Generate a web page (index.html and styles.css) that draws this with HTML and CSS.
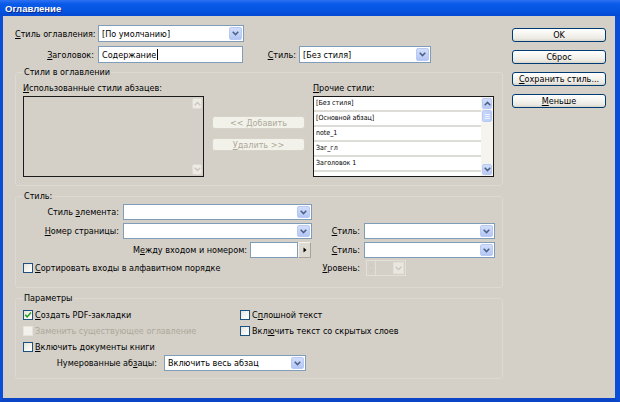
FILE: index.html
```html
<!DOCTYPE html>
<html lang="ru">
<head>
<meta charset="utf-8">
<title>Оглавление</title>
<link rel="stylesheet" href="styles.css">
</head>
<body>
<div class="window">
  <div class="titlebar"><span class="title">Оглавление</span></div>
  <div class="client">
    <div class="content">
      <div class="row r1">
        <span class="lbl w83"><u>С</u>тиль оглавления:</span>
        <div class="combo w146"><span class="val">[По умолчанию]</span><span class="drop"><svg width="7" height="5" viewBox="0 0 7 5"><path d="M0.7 0.7 L3.5 3.6 L6.3 0.7" fill="none" stroke="#4d6185" stroke-width="1.5"/></svg></span></div>
      </div>
      <div class="row r2">
        <span class="lbl w83"><u>З</u>аголовок:</span>
        <div class="input w145"><span class="val">Содержание</span><span class="caret"></span></div>
        <span class="lbl w56"><u>С</u>тиль:</span>
        <div class="combo w132"><span class="val">[Без стиля]</span><span class="drop"><svg width="7" height="5" viewBox="0 0 7 5"><path d="M0.7 0.7 L3.5 3.6 L6.3 0.7" fill="none" stroke="#4d6185" stroke-width="1.5"/></svg></span></div>
      </div>

      <fieldset class="group g1">
        <legend>Стили в оглавлении</legend>
        <div class="g1-body">
          <div class="col-list">
            <div class="cap"><u>И</u>спользованные стили абзацев:</div>
            <div class="listbox disabled">
              <div class="items"></div>
              <div class="vscroll">
                <span class="sbtn off"><svg width="7" height="5" viewBox="0 0 7 5"><path d="M0.7 4.3 L3.5 1.4 L6.3 4.3" fill="none" stroke="#c9c7bd" stroke-width="1.4"/></svg></span>
                <span class="strack"></span>
                <span class="sbtn off"><svg width="7" height="5" viewBox="0 0 7 5"><path d="M0.7 0.7 L3.5 3.6 L6.3 0.7" fill="none" stroke="#c9c7bd" stroke-width="1.4"/></svg></span>
              </div>
            </div>
          </div>
          <div class="col-mid">
            <span class="btn dis"><span>&lt;&lt; <u>Д</u>обавить</span></span>
            <span class="btn dis"><span><u>У</u>далить &gt;&gt;</span></span>
          </div>
          <div class="col-list">
            <div class="cap"><u>П</u>рочие стили:</div>
            <div class="listbox">
              <div class="items">
                <div class="item">[Без стиля]</div>
                <div class="item">[Основной абзац]</div>
                <div class="item">note_1</div>
                <div class="item">Заг_гл</div>
                <div class="item">Заголовок 1</div>
                <div class="item"></div>
              </div>
              <div class="vscroll on">
                <span class="sbtn"><svg width="7" height="5" viewBox="0 0 7 5"><path d="M0.7 4.3 L3.5 1.4 L6.3 4.3" fill="none" stroke="#4d6185" stroke-width="1.5"/></svg></span>
                <span class="thumb"><i></i><i></i><i></i></span>
                <span class="strack"></span>
                <span class="sbtn"><svg width="7" height="5" viewBox="0 0 7 5"><path d="M0.7 0.7 L3.5 3.6 L6.3 0.7" fill="none" stroke="#4d6185" stroke-width="1.5"/></svg></span>
              </div>
            </div>
          </div>
        </div>
      </fieldset>

      <fieldset class="group g2">
        <legend>Стиль:</legend>
        <div class="row ra">
          <span class="lbl w100">Стиль <u>э</u>лемента:</span>
          <div class="combo w189"><span class="val"></span><span class="drop"><svg width="7" height="5" viewBox="0 0 7 5"><path d="M0.7 0.7 L3.5 3.6 L6.3 0.7" fill="none" stroke="#4d6185" stroke-width="1.5"/></svg></span></div>
        </div>
        <div class="row rb">
          <span class="lbl w100"><u>Н</u>омер страницы:</span>
          <div class="combo w189"><span class="val"></span><span class="drop"><svg width="7" height="5" viewBox="0 0 7 5"><path d="M0.7 0.7 L3.5 3.6 L6.3 0.7" fill="none" stroke="#4d6185" stroke-width="1.5"/></svg></span></div>
          <span class="lbl w52"><u>С</u>тиль:</span>
          <div class="combo w131"><span class="val"></span><span class="drop"><svg width="7" height="5" viewBox="0 0 7 5"><path d="M0.7 0.7 L3.5 3.6 L6.3 0.7" fill="none" stroke="#4d6185" stroke-width="1.5"/></svg></span></div>
        </div>
        <div class="row rc">
          <span class="lbl w227">М<u>е</u>жду входом и номером:</span>
          <div class="input w48"></div>
          <span class="arrowbtn"><svg width="4" height="6" viewBox="0 0 4 6"><path d="M0.5 0.5 L3.5 3 L0.5 5.5 Z" fill="#000"/></svg></span>
          <span class="lbl w53"><u>С</u>тиль:</span>
          <div class="combo w131"><span class="val"></span><span class="drop"><svg width="7" height="5" viewBox="0 0 7 5"><path d="M0.7 0.7 L3.5 3.6 L6.3 0.7" fill="none" stroke="#4d6185" stroke-width="1.5"/></svg></span></div>
        </div>
        <div class="row rd">
          <span class="check w289"><span class="box"></span><span><u>С</u>ортировать входы в алфавитном порядке</span></span>
          <span class="lbl w52"><u>У</u>ровень:</span>
          <div class="spinner">
            <span class="spin"><svg width="5" height="10" viewBox="0 0 5 10"><path d="M0.5 3.5 L2.5 1.5 L4.5 3.5 M0.5 6.5 L2.5 8.5 L4.5 6.5" fill="none" stroke="#c9c7bd" stroke-width="1"/></svg></span>
            <span class="spinfield"></span>
            <span class="spindrop"><svg width="7" height="5" viewBox="0 0 7 5"><path d="M0.7 0.7 L3.5 3.6 L6.3 0.7" fill="none" stroke="#c9c7bd" stroke-width="1.3"/></svg></span>
          </div>
        </div>
      </fieldset>

      <fieldset class="group g3">
        <legend>Параметры</legend>
        <div class="row rk">
          <span class="check w217"><span class="box checked"><svg width="8" height="8" viewBox="0 0 8 8"><path d="M1.2 3.8 L3.2 5.9 L6.9 1.6" fill="none" stroke="#21a121" stroke-width="1.6"/></svg></span><span><u>С</u>оздать PDF-закладки</span></span>
          <span class="check"><span class="box"></span><span>С<u>п</u>лошной текст</span></span>
        </div>
        <div class="row rk">
          <span class="check w217 disabled"><span class="box"></span><span>Заменить существующее оглавление</span></span>
          <span class="check"><span class="box"></span><span>Вкл<u>ю</u>чить текст со скрытых слоев</span></span>
        </div>
        <div class="row rk">
          <span class="check w217"><span class="box"></span><span><u>В</u>ключить документы книги</span></span>
        </div>
        <div class="row rn">
          <span class="lbl w141">Нумерованные аб<u>з</u>ацы:</span>
          <div class="combo w142"><span class="val">Включить весь абзац</span><span class="drop"><svg width="7" height="5" viewBox="0 0 7 5"><path d="M0.7 0.7 L3.5 3.6 L6.3 0.7" fill="none" stroke="#4d6185" stroke-width="1.5"/></svg></span></div>
        </div>
      </fieldset>
    </div>

    <div class="buttons">
      <span class="btn"><span>OK</span></span>
      <span class="btn"><span>Сброс</span></span>
      <span class="btn"><span><u>С</u>охранить стиль...</span></span>
      <span class="btn"><span><u>М</u>еньше</span></span>
    </div>
  </div>
</div>
</body>
</html>
```

FILE: styles.css
```css
* { box-sizing: border-box; }
html, body { margin: 0; padding: 0; }
body {
  width: 620px;
  height: 402px;
  overflow: hidden;
  font-family: "DejaVu Sans Condensed", "Liberation Sans", Arial, sans-serif;
  font-size: 9px;
  color: #000;
  background: #d4d0c8;
}
u { text-decoration: underline; text-underline-offset: 1px; }

.window {
  width: 620px;
  height: 402px;
  display: flex;
  flex-direction: column;
}
.titlebar {
  height: 16px;
  flex: none;
  display: flex;
  align-items: center;
  padding-left: 5px;
  background: linear-gradient(180deg, #2c71f2 0%, #0a5ae9 25%, #0553e0 70%, #0449d2 100%);
}
.title {
  color: #fff;
  font-family: "Liberation Sans", Arial, sans-serif;
  font-weight: bold;
  font-size: 9.5px;
  text-shadow: 1px 1px 0 #0b2a8a;
}
.client {
  flex: 1;
  display: flex;
  gap: 7px;
  padding: 9px 9px 0 12px;
  background: #d4d0c8;
  border-left: 3px solid #0a4dd6;
  border-right: 5px solid #0a4dd6;
  border-bottom: 4px solid #0a45c8;
}
.content { width: 490px; flex: none; }
.buttons {
  width: 94px;
  flex: none;
  padding-top: 3px;
  display: flex;
  flex-direction: column;
  gap: 8px;
}

/* rows */
.row { display: flex; align-items: center; }
.r1 { height: 17px; }
.r2 { height: 17px; margin-top: 4px; }
.lbl {
  flex: none;
  text-align: right;
  padding-right: 4px;
  white-space: nowrap;
}
.w83 { width: 83px; }
.w56 { width: 56px; padding-right: 3px; }
.w100 { width: 100px; }
.w52 { width: 52px; }
.w53 { width: 53px; }
.w227 { width: 227px; padding-right: 3px; }
.w141 { width: 141px; padding-right: 7px; }
.w146 { width: 146px; }
.w145 { width: 145px; }
.w132 { width: 132px; }
.w189 { width: 189px; }
.w131 { width: 131px; }
.w142 { width: 142px; }
.w48 { width: 48px; }
.w289 { width: 289px; }
.w217 { width: 217px; }

/* combos & inputs */
.combo, .input {
  flex: none;
  height: 100%;
  border: 1px solid #7f9db9;
  background: #fff;
  display: flex;
  align-items: center;
  padding-left: 3px;
  white-space: nowrap;
  overflow: hidden;
}
.val { flex: 1; overflow: hidden; }
.input .val { flex: none; }
.caret { width: 1px; height: 11px; background: #000; margin-left: 1px; }
.drop {
  flex: none;
  width: 13px;
  height: calc(100% - 2px);
  margin-right: 1px;
  border: 1px solid #b7c9f4;
  border-radius: 2px;
  background: linear-gradient(180deg, #d2ddf9 0%, #c3d3f8 50%, #b3c6f4 100%);
  display: flex;
  align-items: center;
  justify-content: center;
}
.drop svg { display: block; }

/* buttons */
.btn {
  height: 14px;
  display: flex;
  align-items: center;
  justify-content: center;
  border: 1px solid #003c74;
  border-radius: 3px;
  background: linear-gradient(180deg, #ffffff 0%, #f6f5f1 40%, #ebe9e2 80%, #d8d4ca 100%);
  white-space: nowrap;
}
.btn.dis {
  height: 13px;
  width: 93px;
  border-color: #d6d4c9;
  background: #f3f2ea;
  color: #aca899;
}

/* group boxes */
.group {
  margin: 0;
  min-width: 0;
  width: 488px;
  border: 1px solid #dcd9d2;
  border-radius: 3px;
  padding: 0 7px 8px 7px;
}
.group legend {
  padding: 0 1px;
  margin-left: 0;
  line-height: 12px;
  height: 12px;
}
.g1 { margin-top: 3px; }
.g2 { margin-top: 4px; padding-bottom: 11px; }
.g3 { margin-top: 4px; padding-bottom: 7px; }

.g1-body { display: flex; align-items: flex-start; }
.col-list { width: 181px; flex: none; }
.col-list + .col-mid { margin-left: 8px; }
.col-mid + .col-list { margin-left: 8px; }
.col-mid {
  width: 93px;
  flex: none;
  display: flex;
  flex-direction: column;
  gap: 9px;
  padding-top: 38px;
}
.cap { margin-top: 4px; line-height: 12px; height: 12px; }

.listbox {
  margin-top: 2px;
  height: 81px;
  border: 1px solid #1a1a1a;
  background: #fff;
  display: flex;
  overflow: hidden;
}
.listbox.disabled { background: #d4d0c8; }
.items { flex: 1; overflow: hidden; }
.item {
  height: 15px;
  line-height: 13px;
  border-bottom: 2px solid #dedcd6;
  font-size: 7px;
  padding-left: 2px;
  white-space: nowrap;
}
.vscroll {
  width: 12px;
  flex: none;
  display: flex;
  flex-direction: column;
  padding: 1px 0;
}
.vscroll.on { background: #f5f4ef; }
.sbtn {
  height: 11px;
  flex: none;
  margin: 0 1px;
  border: 1px solid #b7c9f4;
  border-radius: 2px;
  background: linear-gradient(180deg, #d2ddf9, #b8caf5);
  display: flex;
  align-items: center;
  justify-content: center;
}
.sbtn.off { background: #edebe3; border-color: #dddbd2; }
.sbtn svg { display: block; }
.strack { flex: 1; }
.thumb {
  height: 12px;
  margin: 1px 1px 0;
  border: 1px solid #b7c9f4;
  border-radius: 2px;
  background: linear-gradient(90deg, #c8d6f9, #bacdf6);
  display: flex;
  flex-direction: column;
  justify-content: center;
  align-items: center;
  gap: 1px;
}
.thumb i { display: block; width: 5px; height: 1px; background: #eef3fe; }

/* group 2 */
.ra { height: 16px; margin-top: 2px; }
.rb { height: 16px; margin-top: 3px; }
.rc { height: 16px; margin-top: 3px; }
.rd { height: 16px; margin-top: 2px; }
.arrowbtn {
  width: 13px;
  height: 100%;
  flex: none;
  border: 1px solid #f4f3ee;
  border-right-color: #a9a596;
  border-bottom-color: #a9a596;
  background: #dedbd3;
  display: flex;
  align-items: center;
  justify-content: center;
}
.arrowbtn svg { display: block; }

.check {
  display: flex;
  align-items: center;
  white-space: nowrap;
  flex: none;
}
.box {
  width: 10px;
  height: 10px;
  flex: none;
  margin-right: 2px;
  border: 1px solid #1c5180;
  background: linear-gradient(135deg, #e4e3dc 0%, #f6f6f3 60%, #ffffff 100%);
  display: flex;
  align-items: center;
  justify-content: center;
}
.box svg { display: block; }
.check.disabled { color: #aca899; }
.check.disabled .box { border-color: #e6e4dc; background: #f2f1ec; }

.spinner {
  width: 40px;
  height: 100%;
  flex: none;
  margin-left: 2px;
  border: 1px solid #e2e0d8;
  display: flex;
  align-items: stretch;
}
.spin {
  width: 9px;
  display: flex;
  align-items: center;
  justify-content: center;
  border-right: 1px solid #e2e0d8;
}
.spinfield { flex: 1; }
.spindrop {
  width: 11px;
  margin: 1px;
  border: 1px solid #e2e0d8;
  background: #e9e7e0;
  display: flex;
  align-items: center;
  justify-content: center;
}
.spin svg, .spindrop svg { display: block; }

/* group 3 */
.rk { height: 16px; }
.g3 .rk:first-of-type { margin-top: 3px; }
.rn { height: 16px; }
```
